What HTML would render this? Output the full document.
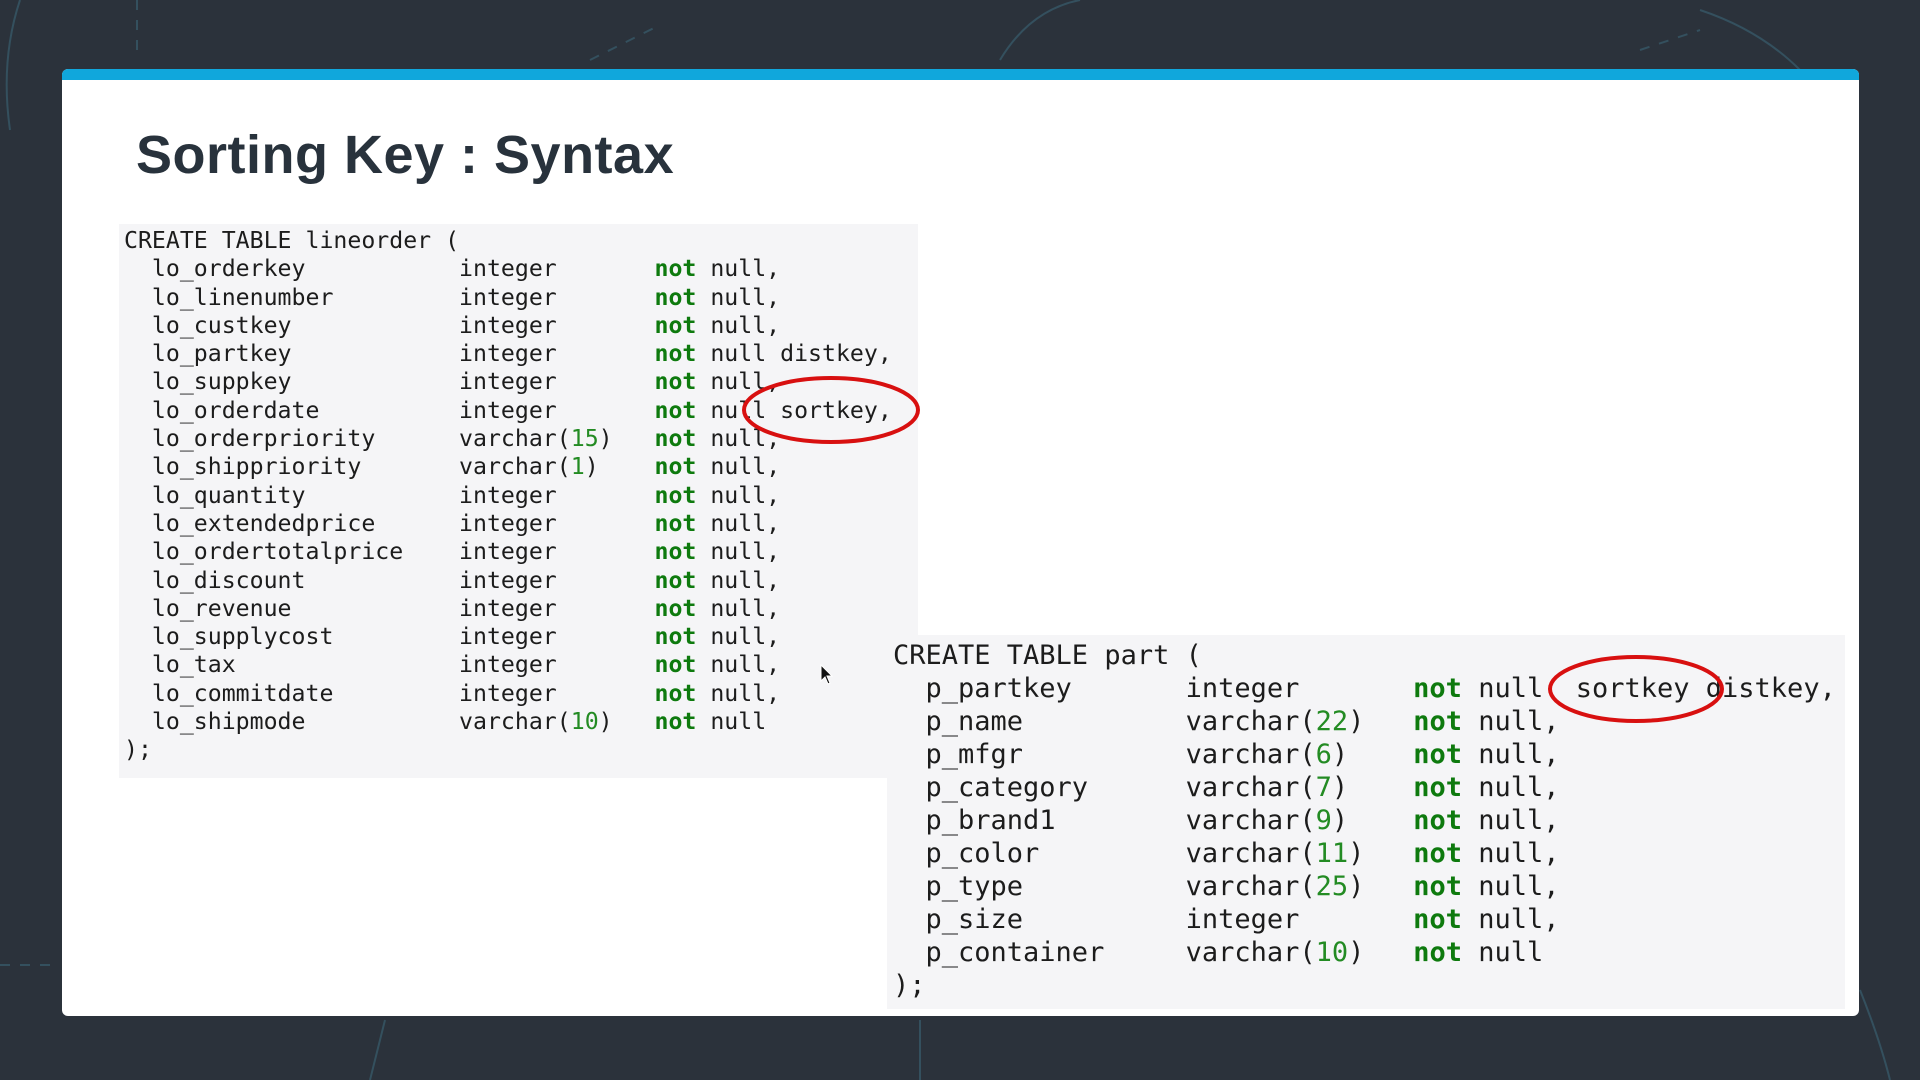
<!DOCTYPE html>
<html><head><meta charset="utf-8"><style>
html,body{margin:0;padding:0;width:1920px;height:1080px;overflow:hidden;background:#2b323b;}
.card{position:absolute;left:62px;top:69px;width:1797px;height:947px;background:#fff;border-radius:6px;overflow:hidden;}
.bar{position:absolute;left:0;top:0;right:0;height:11px;background:#10a7dc;}
h1{position:absolute;left:136px;top:124px;margin:0;font:bold 54px "Liberation Sans",sans-serif;color:#28323c;letter-spacing:0.5px;}
pre{position:absolute;margin:0;font-family:"DejaVu Sans Mono","Liberation Mono",monospace;color:#1c1c1c;background:#f5f5f7;}
.b1{left:119px;top:224px;width:794px;height:551px;font-size:23.2px;line-height:28.3px;padding:3px 0 0 5px;}
.b2{left:887px;top:635px;width:952px;height:370px;font-size:27px;line-height:33px;padding:4px 0 0 6px;}
b{color:#0e7a0e;}
i{font-style:normal;color:#238b23;}
</style></head><body>
<svg width="1920" height="1080" style="position:absolute;left:0;top:0" fill="none" stroke="#34505e" stroke-width="2">
<path d="M20 0 Q0 60 10 130" />
<path d="M137 0 V60" stroke-dasharray="10 10"/>
<path d="M590 60 L660 25" stroke-dasharray="10 10"/>
<path d="M1000 60 Q1030 10 1080 0"/>
<path d="M1640 50 L1700 30" stroke-dasharray="10 10"/>
<path d="M1700 10 Q1760 30 1800 70"/>
<path d="M0 965 H60" stroke-dasharray="10 10"/>
<path d="M385 1020 L370 1080"/>
<path d="M920 1020 V1080"/>
<path d="M1860 990 Q1880 1040 1890 1080"/>
</svg>
<div class="card"><div class="bar"></div></div>
<h1>Sorting Key : Syntax</h1>
<pre class="b1">CREATE TABLE lineorder (
  lo_orderkey           integer       <b>not</b> null,
  lo_linenumber         integer       <b>not</b> null,
  lo_custkey            integer       <b>not</b> null,
  lo_partkey            integer       <b>not</b> null distkey,
  lo_suppkey            integer       <b>not</b> null,
  lo_orderdate          integer       <b>not</b> null sortkey,
  lo_orderpriority      varchar(<i>15</i>)   <b>not</b> null,
  lo_shippriority       varchar(<i>1</i>)    <b>not</b> null,
  lo_quantity           integer       <b>not</b> null,
  lo_extendedprice      integer       <b>not</b> null,
  lo_ordertotalprice    integer       <b>not</b> null,
  lo_discount           integer       <b>not</b> null,
  lo_revenue            integer       <b>not</b> null,
  lo_supplycost         integer       <b>not</b> null,
  lo_tax                integer       <b>not</b> null,
  lo_commitdate         integer       <b>not</b> null,
  lo_shipmode           varchar(<i>10</i>)   <b>not</b> null
);</pre>
<pre class="b2">CREATE TABLE part (
  p_partkey       integer       <b>not</b> null  sortkey distkey,
  p_name          varchar(<i>22</i>)   <b>not</b> null,
  p_mfgr          varchar(<i>6</i>)    <b>not</b> null,
  p_category      varchar(<i>7</i>)    <b>not</b> null,
  p_brand1        varchar(<i>9</i>)    <b>not</b> null,
  p_color         varchar(<i>11</i>)   <b>not</b> null,
  p_type          varchar(<i>25</i>)   <b>not</b> null,
  p_size          integer       <b>not</b> null,
  p_container     varchar(<i>10</i>)   <b>not</b> null
);</pre>
<svg width="1920" height="1080" style="position:absolute;left:0;top:0" fill="none" stroke="#d81010" stroke-width="4">
<ellipse cx="831" cy="410" rx="87" ry="32"/>
<ellipse cx="1636" cy="689" rx="86" ry="32"/>
<path d="M821 665 v16 l4 -4 l3 7 l2 -1 l-3 -7 h5 z" fill="#111" stroke="#fff" stroke-width="1"/>
</svg>
</body></html>
